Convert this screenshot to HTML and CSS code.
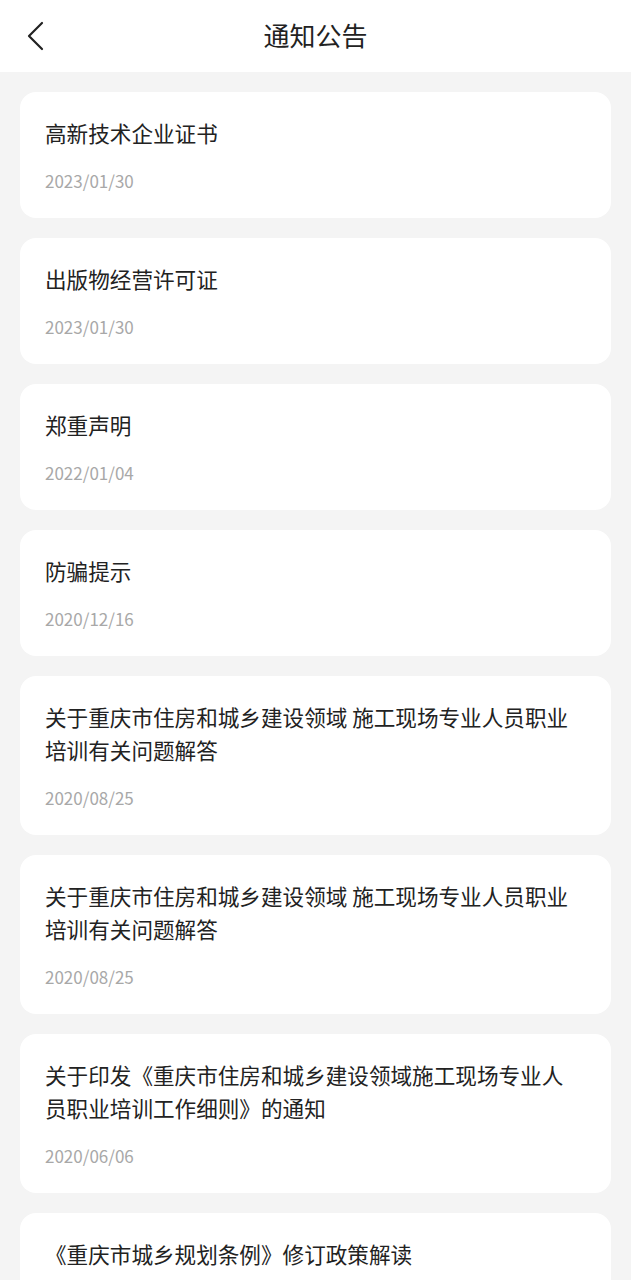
FILE: index.html
```html
<!DOCTYPE html>
<html lang="zh-CN">
<head>
<meta charset="utf-8">
<title>通知公告</title>
<link rel="stylesheet" href="styles.css">
</head>
<body>
<header class="topbar">
  <span class="back" aria-label="返回">
    <svg width="18" height="30" viewBox="0 0 18 30"><path d="M16 2 L3 15 L16 28" fill="none" stroke="#222" stroke-width="2.2" stroke-linecap="round" stroke-linejoin="round"/></svg>
  </span>
  <h1 class="title">通知公告</h1>
</header>
<main class="list">
  <div class="card"><p class="card-title">高新技术企业证书</p><p class="card-date">2023/01/30</p></div>
  <div class="card"><p class="card-title">出版物经营许可证</p><p class="card-date">2023/01/30</p></div>
  <div class="card"><p class="card-title">郑重声明</p><p class="card-date">2022/01/04</p></div>
  <div class="card"><p class="card-title">防骗提示</p><p class="card-date">2020/12/16</p></div>
  <div class="card"><p class="card-title">关于重庆市住房和城乡建设领域 施工现场专业人员职业培训有关问题解答</p><p class="card-date">2020/08/25</p></div>
  <div class="card"><p class="card-title">关于重庆市住房和城乡建设领域 施工现场专业人员职业培训有关问题解答</p><p class="card-date">2020/08/25</p></div>
  <div class="card"><p class="card-title">关于印发《重庆市住房和城乡建设领域施工现场专业人员职业培训工作细则》的通知</p><p class="card-date">2020/06/06</p></div>
  <div class="card"><p class="card-title">《重庆市城乡规划条例》修订政策解读</p><p class="card-date">2020/05/20</p></div>
</main>
</body>
</html>
```

FILE: styles.css
```css
html, body {
  margin: 0;
  padding: 0;
}
body {
  background: #f4f4f4;
  font-family: "Noto Sans CJK SC", "Noto Sans", sans-serif;
  color: #222;
}
.topbar {
  height: 72px;
  background: #fff;
  display: flex;
  align-items: center;
  justify-content: center;
  position: relative;
}
.back {
  position: absolute;
  left: 26px;
  top: 21px;
  display: flex;
}
.title {
  margin: 0 0 2px;
  font-size: 26px;
  font-weight: 400;
  line-height: 1;
  color: #222;
}
.list {
  padding: 20px;
  display: flex;
  flex-direction: column;
  gap: 20px;
}
.card {
  background: #fff;
  border-radius: 16px;
  padding: 24px 30px 27px 25px;
}
.card-title {
  margin: 0;
  font-size: 21.6px;
  line-height: 33px;
  color: #222;
}
.card-date {
  margin: 22px 0 0;
  font-size: 17px;
  line-height: 20px;
  color: #a8a8a8;
}
```
